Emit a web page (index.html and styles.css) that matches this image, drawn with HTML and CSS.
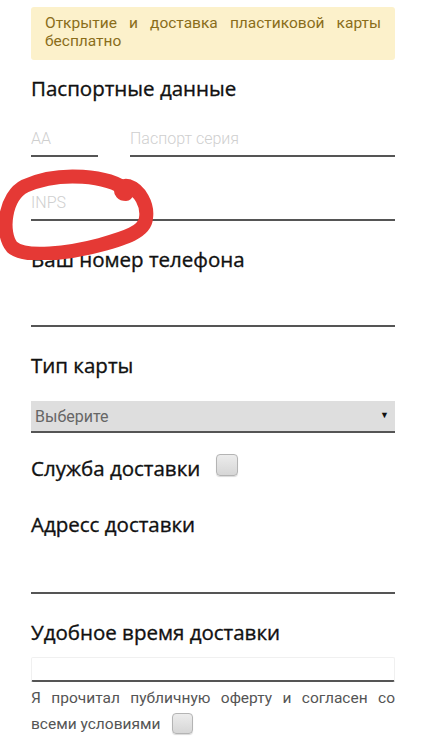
FILE: index.html
```html
<!DOCTYPE html>
<html lang="ru">
<head>
  <meta charset="UTF-8" />
  <meta name="viewport" content="width=device-width, initial-scale=1.0" />
  <title>Заявка на карту</title>
  <link rel="stylesheet" href="styles.css">
</head>
<body>

  <div class="alert">Открытие и доставка пластиковой карты бесплатно</div>

  <form class="card-form">
    <h2 class="field-title first">Паспортные данные</h2>
    <div class="passport-row">
      <input type="text" class="line-input series" placeholder="AA">
      <input type="text" class="line-input number" placeholder="Паспорт серия">
    </div>
    <input type="text" class="line-input inps" placeholder="INPS">

    <h2 class="field-title">Ваш номер телефона</h2>
    <input type="tel" class="line-input">

    <h2 class="field-title">Тип карты</h2>
    <div class="select-wrap">
      <select class="card-select">
        <option>Выберите</option>
      </select>
    </div>

    <label class="field-title check-title">
      Служба доставки
      <input type="checkbox" class="box">
    </label>

    <h2 class="field-title address-title">Адресс доставки</h2>
    <input type="text" class="line-input">

    <h2 class="field-title">Удобное время доставки</h2>
    <input type="text" class="time-input">

    <p class="agree">Я прочитал публичную оферту и согласен со всеми условиями <input type="checkbox" class="box small"></p>
  </form>

  <!-- hand-drawn marker over the INPS field -->
  <svg class="scribble" width="170" height="100" viewBox="0 0 170 100">
    <path d="M126 30 C110 16 60 10 25 26 C5 36 0 72 12 87 C25 99 70 93 100 85 C125 78 145 72 146 58 C148 45 140 30 128 26 C120 24 118 34 126 34"
          fill="none" stroke="#e53935" stroke-width="14" stroke-linecap="round" stroke-linejoin="round"/>
  </svg>

</body>
</html>
```

FILE: styles.css
```css
/* --- Core --- */
html, body {
  margin: 0;
}
body {
  position: relative;
  font-family: Roboto, 'Noto Sans', sans-serif;
  background: #fff;
  color: #111;
  padding: 7px 26px 20px 31px;
}

/* --- Notice --- */
.alert {
  background: #fcf1cb;
  color: #8a6d1a;
  font-size: 15.5px;
  line-height: 18px;
  padding: 7px 14px 10px;
  border-radius: 3px;
  text-align: justify;
  text-align-last: left;
}

/* --- Form --- */
.card-form {
  display: flex;
  flex-direction: column;
}
.field-title {
  font-family: 'Open Sans', 'Noto Sans', sans-serif;
  font-size: 20.5px;
  font-weight: 400;
  -webkit-text-stroke: 0.35px currentColor;
  line-height: 26px;
  margin: 25px 0 19px;
  color: #111;
}
.field-title.first {
  margin-top: 15px;
  margin-bottom: 20px;
}
.line-input {
  display: block;
  width: 100%;
  height: 36px;
  box-sizing: border-box;
  border: none;
  border-bottom: 2px solid #555;
  padding: 0;
  font-family: Roboto, sans-serif;
  font-size: 16px;
  font-weight: 300;
  background: transparent;
  outline: none;
}
.line-input::placeholder {
  color: #cfcfcf;
}
.passport-row {
  display: flex;
  gap: 32px;
}
.passport-row .series {
  width: 67px;
  flex-shrink: 0;
}
.passport-row .number {
  flex: 1;
}
.inps {
  margin-top: 28px;
}

/* --- Select --- */
.select-wrap {
  position: relative;
  margin-top: 4px;
}
.select-wrap::after {
  content: "▼";
  position: absolute;
  right: 6px;
  top: 9px;
  font-size: 9px;
  color: #111;
  pointer-events: none;
}
.card-select {
  appearance: none;
  -webkit-appearance: none;
  width: 100%;
  height: 32px;
  border: none;
  border-bottom: 2px solid #555;
  border-radius: 0;
  background: #dedede;
  color: #666;
  font-family: Roboto, sans-serif;
  font-size: 16px;
  padding: 0 4px;
  outline: none;
}

/* --- Checkboxes --- */
.check-title {
  display: flex;
  align-items: center;
  gap: 16px;
  margin-top: 22px;
  margin-bottom: 0;
}
.box {
  appearance: none;
  -webkit-appearance: none;
  width: 22px;
  height: 22px;
  margin: 0;
  border: 1px solid #b4b4b4;
  border-radius: 4px;
  background: linear-gradient(#ececec, #d6d6d6);
  box-shadow: 0 1px 1px rgba(0,0,0,0.15);
  box-sizing: border-box;
  -webkit-text-stroke: 0;
}
.check-title .box {
  position: relative;
  top: -3px;
}
.address-title {
  margin-top: 30px;
  margin-bottom: 21px;
}

.time-input {
  display: block;
  width: 100%;
  height: 25px;
  box-sizing: border-box;
  margin-top: -7px;
  border: 1px solid #f0f0f0;
  border-bottom: 2px solid #555;
  border-radius: 2px;
  background: #fff;
  outline: none;
}

.agree {
  margin: 3px 0 0;
  font-size: 15.5px;
  line-height: 26px;
  color: #555;
  text-align: justify;
  text-align-last: left;
}
.agree .box {
  width: 21px;
  height: 21px;
  vertical-align: -5px;
  margin-left: 8px;
}

/* --- Overlay marker --- */
.scribble {
  position: absolute;
  left: 0;
  top: 160px;
}
```
